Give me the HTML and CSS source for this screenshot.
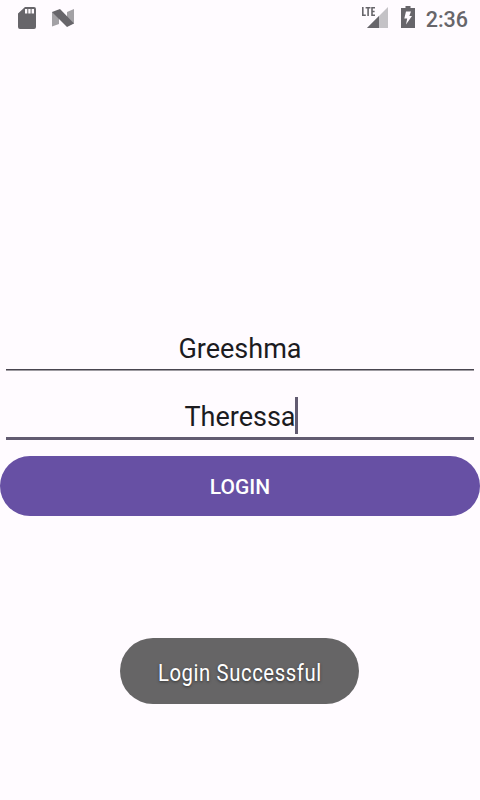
FILE: index.html
```html
<!DOCTYPE html>
<html lang="en">
<head>
<meta charset="utf-8">
<title>Login</title>
<link rel="stylesheet" href="styles.css">
</head>
<body>
<div class="screen">
  <header class="status">
    <svg class="sd" width="18" height="22" viewBox="0 0 18 22"><path fill="#67656a" fill-rule="evenodd" d="M7 0H16Q18 0 18 2V20Q18 22 16 22H2Q0 22 0 20V6.500ZM7 2V6.500H9.300V2ZM10.300 2V6.500H12.600V2ZM13.600 2V6.500H16V2Z"/></svg>
    <svg class="nougat" width="22" height="18" viewBox="0 0 22 18"><path fill="#a3a1a5" d="M0 3L7 3V15L0 17.500ZM15 3L22 0V14.500L15 16Z"/><path fill="#67656a" d="M0 3L8 0L22 14.500L15 18Z"/></svg>
    <svg class="signal" width="27" height="22" viewBox="0 0 27 22"><path fill="#c4c2c6" d="M27 0V21H6Z"/><path fill="#67656a" d="M18 9V21H6Z"/><path fill="none" stroke="#67656a" stroke-width="1.600" d="M1.800 0V8.300H4.800M4.600 .8H9.500M7.100 .8V9M14 .8H11V8.300H14M11 4.500H13.600"/></svg>
    <svg class="battery" width="14" height="22" viewBox="0 0 14 22"><path fill="#67656a" d="M4.500 0H9.500V2H14V22H0V2H4.500Z"/><path fill="#fffbff" d="M5 5.500H10L8.300 10H11L5 18.500L6.200 12.500H3.300Z"/></svg>
    <span class="time">2:36</span>
  </header>
  <main class="form">
    <div class="field"><span class="value">Greeshma</span></div>
    <div class="field focused"><span class="value">Theressa<i class="caret"></i></span></div>
    <button class="login">LOGIN</button>
  </main>
  <div class="toast"><span class="message">Login Successful</span></div>
</div>
</body>
</html>
```
FILE: styles.css
```css
body {
  margin: 0;
  background: #fffbff;
  font-family: Roboto, sans-serif;
}
.screen {
  height: 800px;
  display: flex;
  flex-direction: column;
  overflow: hidden;
}
.status {
  height: 36px;
  box-sizing: border-box;
  padding: 0 12px 0 18px;
  display: flex;
  align-items: center;
  color: #67656a;
}
.nougat { margin-left: 16px; }
.signal { margin: -1px 13px 0 auto; }
.battery { margin: -2px 11px 0 0; }
.time {
  font-size: 21.5px;
  line-height: 36px;
  font-weight: 500;
  padding-top: 3px;
}
.form {
  margin-top: 292px;
  display: flex;
  flex-direction: column;
}
.field {
  height: 41px;
  margin: 0 6px;
  border-bottom: 1px solid #49454f;
  box-shadow: 0 1px #9f9ca2;
  text-align: center;
  font-size: 27px;
  line-height: 43px;
  color: #1c1b1f;
}
.focused {
  margin-top: 26px;
  border-bottom: 3px solid #625b71;
  box-shadow: none;
}
.value {
  position: relative;
}
.caret {
  position: absolute;
  left: calc(100% - 1px);
  top: -4px;
  width: 3px;
  height: 37px;
  background: #625b71;
}
.login {
  height: 60px;
  margin-top: 16px;
  padding: 2px 0 0;
  border: 0;
  border-radius: 30px;
  background: #6750a4;
  color: #fff;
  font: 500 21px/58px Roboto, sans-serif;
}
.toast {
  width: 239px;
  height: 66px;
  margin: 122px 0 0 120px;
  border-radius: 33px;
  background: #666566;
  display: flex;
  align-items: center;
  justify-content: center;
}
.message {
  flex: none;
  padding: 3px 0 0 1px;
  font-size: 24px;
  letter-spacing: .7px;
  color: #fff;
  text-shadow: 0 1px 3px rgba(0, 0, 0, .5);
  transform: scaleX(.845);
}
```
